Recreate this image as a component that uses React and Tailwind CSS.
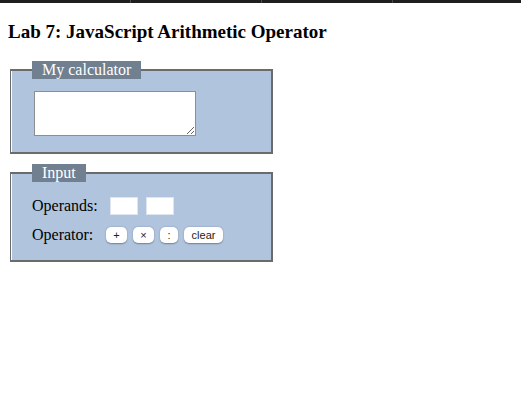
import React from "react";

export default function App() {
  const serif = { fontFamily: '"Liberation Serif", "Times New Roman", serif' };
  const btn =
    "h-[16px] rounded-[5px] bg-white text-center leading-[16px] shadow-[0_0.5px_1.5px_rgba(0,0,0,0.35)]";
  return (
    <div className="min-h-[413px] bg-white text-black" style={serif}>
      <div className="flex h-[3px] bg-[#1f1f1f]">
        <div className="w-[131px] border-r border-[#4a4a4a]" />
        <div className="w-[131px] border-r border-[#4a4a4a]" />
        <div className="w-[131px] border-r border-[#4a4a4a]" />
      </div>
      <div className="px-2">
        <h3 className="mt-[18px] mb-[18px] text-[19px] font-bold leading-[21.5px]">
          Lab 7: JavaScript Arithmetic Operator
        </h3>

        <fieldset className="ml-[2px] w-[263px] border-t-2 border-r-2 border-b-2 border-l border-[#6b6b6b] bg-[#b0c4de] pl-[21px] pr-3 pt-[12px] pb-[16px] shadow-[inset_1px_0_0_#ffffff]">
          <legend className="bg-[#708090] px-[10px] text-[16px] leading-[18px] text-white">
            My calculator
          </legend>
          <textarea className="ml-[2px] block h-[45px] w-[162px] resize border border-[#8e8e8e] bg-white" />
        </fieldset>

        <fieldset className="ml-[2px] mt-[10px] w-[263px] border-t-2 border-r-2 border-b-2 border-l border-[#6b6b6b] bg-[#b0c4de] pl-[21px] pr-3 pt-[15px] pb-[16px] shadow-[inset_1px_0_0_#ffffff]">
          <legend className="bg-[#708090] px-[10px] text-[16px] leading-[18px] text-white">
            Input
          </legend>
          <div className="flex h-[18px] items-center text-[16px]">
            <span className="w-[78px] leading-[18px]">Operands:</span>
            <input className="h-[18px] w-[28px] border border-[#dfe5ee] bg-white" />
            <input className="ml-[8px] h-[18px] w-[28px] border border-[#dfe5ee] bg-white" />
          </div>
          <div className="mt-[11px] flex h-[18px] items-center text-[16px]">
            <span className="w-[74px] leading-[18px]">Operator:</span>
            <div
              className="flex gap-[6px] text-[11px] text-[#222]"
              style={{ fontFamily: '"Liberation Sans", Arial, sans-serif' }}
            >
              <button className={`${btn} w-[21px]`}>+</button>
              <button className={`${btn} w-[21px]`}>×</button>
              <button className={`${btn} w-[18px]`}>:</button>
              <button className={`${btn} w-[39px]`}>clear</button>
            </div>
          </div>
        </fieldset>
      </div>
    </div>
  );
}
